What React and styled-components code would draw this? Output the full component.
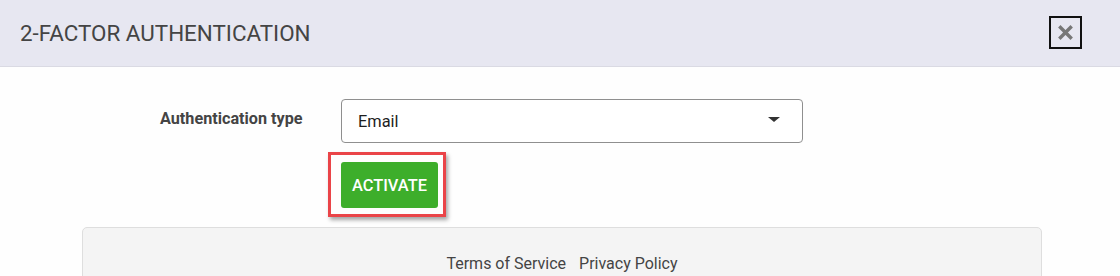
import React from 'react';
import styled, { createGlobalStyle } from 'styled-components';

const GlobalStyle = createGlobalStyle`
  html, body {
    margin: 0;
    padding: 0;
    background: #fefefe;
    font-family: Roboto, "Liberation Sans", Arial, sans-serif;
  }
  * { box-sizing: border-box; }
`;

const Modal = styled.div`
  width: 1120px;
  height: 276px;
  overflow: hidden;
  background: #fefefe;
`;

const Header = styled.div`
  height: 67px;
  display: flex;
  align-items: center;
  justify-content: space-between;
  padding: 0 38px 0 20px;
  background: #e7e7f1;
  border-bottom: 1px solid #dadae3;
`;

const Title = styled.h2`
  margin: 0;
  font-size: 22.4px;
  font-weight: 400;
  color: #444;
  margin-top: -1px;
`;

const CloseButton = styled.button`
  width: 33px;
  height: 33px;
  padding: 0;
  display: flex;
  align-items: center;
  justify-content: center;
  background: transparent;
  border: 2px solid #111;
  margin-top: -2px;
`;

const Body = styled.div`
  padding: 32px 0 0 160px;
`;

const FieldRow = styled.div`
  display: flex;
  align-items: flex-start;
`;

const Label = styled.label`
  width: 181px;
  padding-top: 10px;
  font-size: 16.2px;
  line-height: 20px;
  font-weight: 700;
  color: #444;
`;

const Select = styled.div`
  width: 462px;
  height: 44px;
  display: flex;
  align-items: center;
  justify-content: space-between;
  padding: 0 22px 0 16px;
  border: 1px solid #8f8f8f;
  border-radius: 4px;
  background: #fff;
  font-size: 16.4px;
  color: #1e1e1e;
`;

const Caret = styled.span`
  width: 0;
  height: 0;
  border-left: 6px solid transparent;
  border-right: 6px solid transparent;
  border-top: 5px solid #333;
  margin-top: -3px;
`;

const Actions = styled.div`
  display: flex;
  padding-left: 328px;
  margin-top: 9px;
`;

const Highlight = styled.div`
  display: inline-flex;
  padding: 7px 5px 6px 10px;
  border: 3px solid #ea4448;
  box-shadow: 2px 3px 4px rgba(0, 0, 0, 0.35);
`;

const PrimaryButton = styled.button`
  height: 46px;
  width: 97px;
  padding: 0;
  border: none;
  border-radius: 3px;
  background: #3dae2b;
  color: #fff;
  font-family: Roboto, "Liberation Sans", Arial, sans-serif;
  font-size: 16.4px;
  font-weight: 500;
`;

const Footer = styled.div`
  width: 960px;
  margin: 10px 0 0 82px;
  height: 80px;
  padding-top: 26px;
  display: flex;
  justify-content: center;
  gap: 13px;
  background: #f4f4f4;
  border: 1px solid #dedede;
  border-radius: 5px;
`;

const FooterLink = styled.a`
  font-size: 16px;
  color: #444;
  text-decoration: none;
`;

export default function App() {
  return (
    <>
      <GlobalStyle />
      <Modal>
        <Header>
          <Title>2-FACTOR AUTHENTICATION</Title>
          <CloseButton aria-label="Close">
            <svg width="15" height="15" viewBox="0 0 15 15">
              <path d="M2.5 2.5 L12.5 12.5 M12.5 2.5 L2.5 12.5" stroke="#777" strokeWidth="3.4" strokeLinecap="square" />
            </svg>
          </CloseButton>
        </Header>
        <Body>
          <FieldRow>
            <Label>Authentication type</Label>
            <Select>
              <span>Email</span>
              <Caret />
            </Select>
          </FieldRow>
        </Body>
        <Actions>
          <Highlight>
            <PrimaryButton>ACTIVATE</PrimaryButton>
          </Highlight>
        </Actions>
        <Footer>
          <FooterLink href="#">Terms of Service</FooterLink>
          <FooterLink href="#">Privacy Policy</FooterLink>
        </Footer>
      </Modal>
    </>
  );
}
